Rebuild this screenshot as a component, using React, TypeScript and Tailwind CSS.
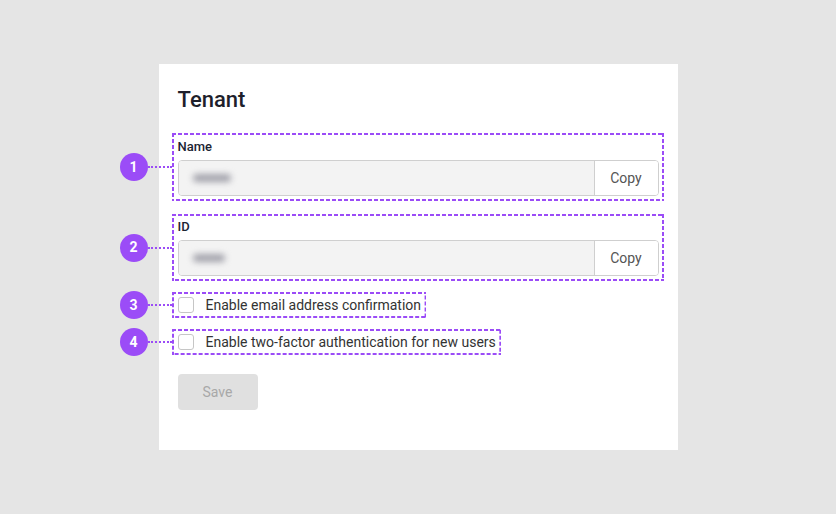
import type { ReactNode } from "react"

const PURPLE = "#9b4cf7"

function Marker({ n, className, children }: { n: number; className: string; children: ReactNode }) {
  return (
    <div className="relative">
      {children}
      <div className={`pointer-events-none absolute ${className}`}>
        <svg className="absolute inset-0 h-full w-full">
          <rect x="0" y="0" width="100%" height="100%" fill="none" stroke={PURPLE} strokeWidth="4" strokeDasharray="4 2" />
        </svg>
        <div className="absolute right-full top-1/2 flex -translate-y-1/2 items-center">
          <div className="flex h-[28px] w-[28px] items-center justify-center rounded-full bg-[#9b4cf7] text-[14px] font-bold text-white">
            {n}
          </div>
          <div className="w-[24px] border-t-2 border-dotted border-[#9b4cf7]" />
        </div>
      </div>
    </div>
  )
}

function Field({ label, blurWidth }: { label: string; blurWidth: string }) {
  return (
    <div>
      <div className="mb-[4px] h-[18px] text-[13px] font-medium leading-[18px] text-[#1c2433]">{label}</div>
      <div className="flex h-[36px] overflow-hidden rounded-[4px] border border-[#cfcfcf]">
        <div className="flex flex-1 items-center bg-[#f3f3f3] pl-[14px]">
          <span className={`h-[8px] ${blurWidth} rounded-full bg-[#a2a2ab] blur-[3px]`} />
        </div>
        <button className="w-[64px] border-l border-[#cfcfcf] bg-white text-[14px] text-[#555]">Copy</button>
      </div>
    </div>
  )
}

function Check({ label }: { label: string }) {
  return (
    <label className="flex h-[20px] items-center gap-[12px] text-[14px] leading-[18px] text-[#333]">
      <span className="h-[16px] w-[16px] rounded-[3px] border border-[#c6c6c6] bg-white" />
      <span className="-mt-px">{label}</span>
    </label>
  )
}

export default function App() {
  return (
    <div className="flex h-screen items-center justify-center bg-[#e5e5e5] font-['Roboto',sans-serif]">
      <div className="h-[386px] w-[519px] bg-white px-[19px] pt-[22px]">
        <h1 className="h-[28px] text-[22px] font-medium leading-[28px] text-[#1e1f2b]">Tenant</h1>
        <div className="mt-[24px]">
          <Marker n={1} className="-bottom-[5px] -left-[6px] -right-[5px] -top-[5px]">
            <Field label="Name" blurWidth="w-[38px]" />
          </Marker>
        </div>
        <div className="mt-[22px]">
          <Marker n={2} className="-bottom-[5px] -left-[6px] -right-[5px] -top-[4px]">
            <Field label="ID" blurWidth="w-[32px]" />
          </Marker>
        </div>
        <div className="mt-[19px] w-fit">
          <Marker n={3} className="-bottom-[3px] -left-[6px] -right-[5px] -top-[3px]">
            <Check label="Enable email address confirmation" />
          </Marker>
        </div>
        <div className="mt-[17px] w-fit">
          <Marker n={4} className="-bottom-[3px] -left-[6px] -right-[5px] -top-[3px]">
            <Check label="Enable two-factor authentication for new users" />
          </Marker>
        </div>
        <button className="mt-[22px] h-[36px] w-[80px] rounded-[4px] bg-[#e0e0e0] text-[14px] text-[#a8a8a8]">Save</button>
      </div>
    </div>
  )
}
